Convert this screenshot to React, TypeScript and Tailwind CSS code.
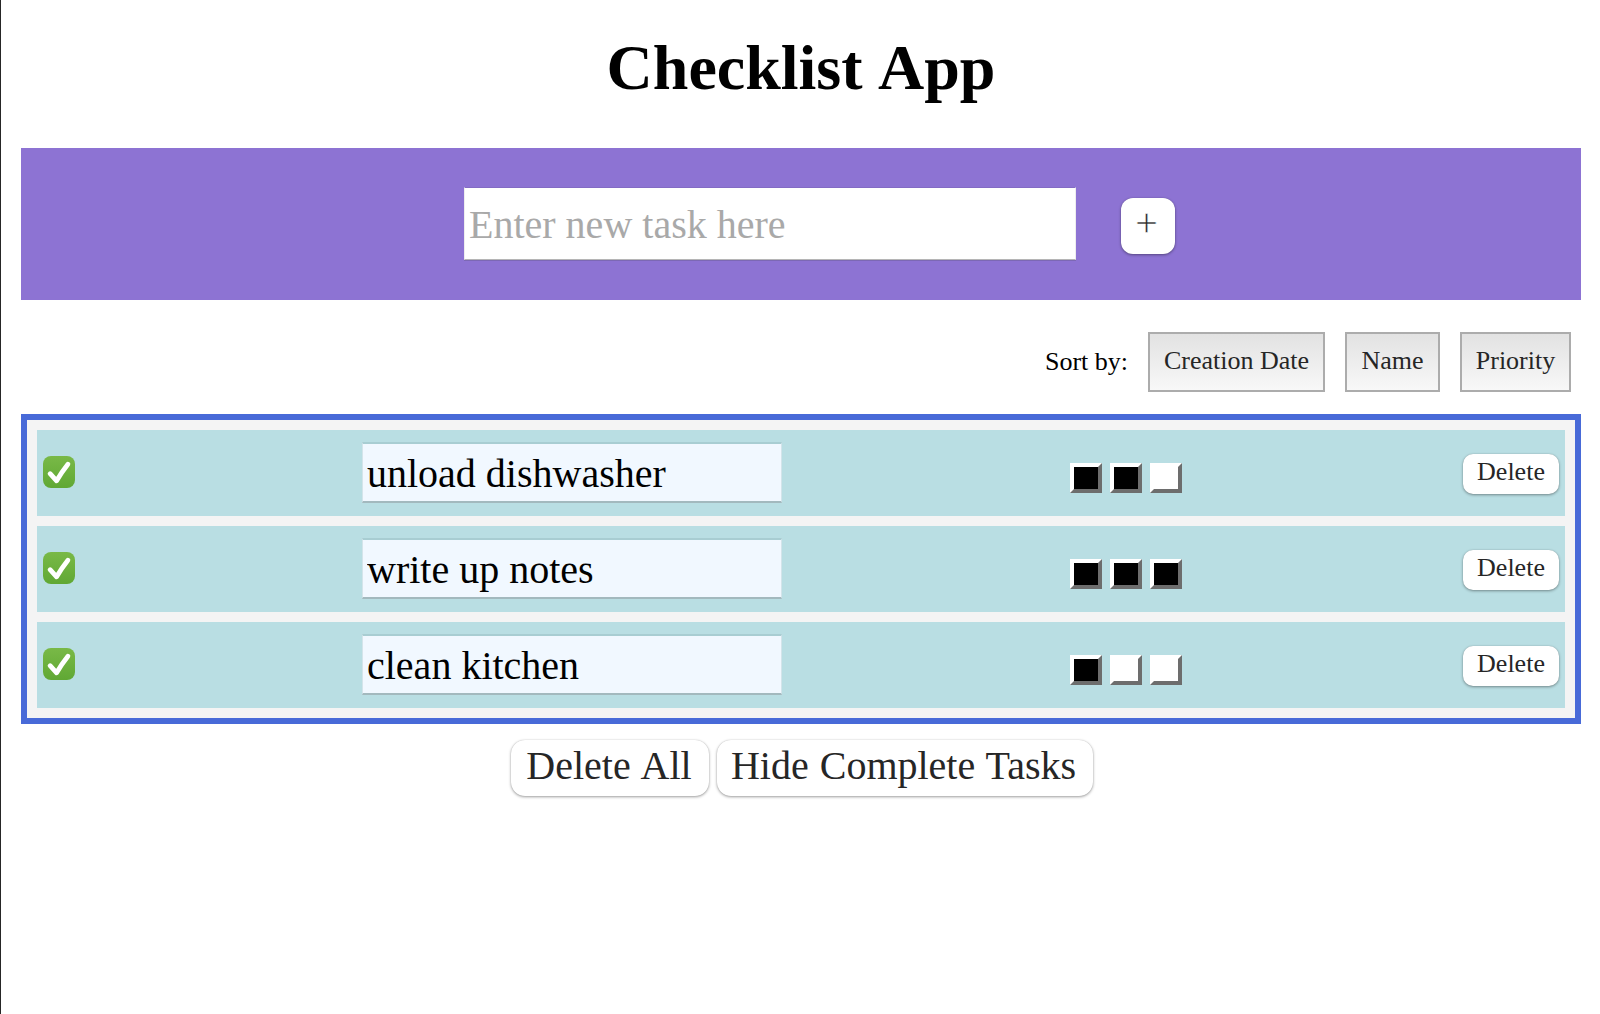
import React from "react";

type Task = { name: string; priority: number };

const tasks: Task[] = [
  { name: "unload dishwasher", priority: 2 },
  { name: "write up notes", priority: 3 },
  { name: "clean kitchen", priority: 1 },
];

const softButton =
  "bg-white text-[#262626] shadow-[0_1px_3px_rgba(0,0,0,0.38),0_0_1px_rgba(0,0,0,0.2)]";

function CheckIcon() {
  return (
    <svg viewBox="0 0 32 32" className="block size-8" fill="none">
      <defs>
        <linearGradient id="check-fill" x1="0" y1="0" x2="0" y2="1">
          <stop offset="0" stopColor="#79b947" />
          <stop offset="1" stopColor="#60a834" />
        </linearGradient>
      </defs>
      <rect width="32" height="32" rx="8" fill="url(#check-fill)" />
      <path
        d="M7.1 17.7 13.6 24.8Q18.8 15.8 24.9 8.2"
        stroke="#fff"
        strokeWidth="4.8"
        strokeLinecap="round"
        strokeLinejoin="round"
      />
    </svg>
  );
}

function SortButton({ label, width }: { label: string; width: string }) {
  return (
    <button
      className={`${width} h-[60px] whitespace-nowrap border-2 border-[#acacac] bg-linear-to-b from-[#e2e2e2] to-[#f8f8f8] pb-[3px] text-[26px] leading-[30px] text-[#262626]`}
    >
      {label}
    </button>
  );
}

function Priority({ level }: { level: number }) {
  return (
    <div className="flex gap-2 pt-[9px] pl-[7px]">
      {[1, 2, 3].map((n) => (
        <button
          key={n}
          aria-label={`Priority ${n}`}
          className={`h-[30px] w-8 border-4 border-t-white border-r-[#6d6d6d] border-b-[#6d6d6d] border-l-white bg-clip-padding ${
            n <= level ? "bg-black" : "bg-white"
          }`}
        />
      ))}
    </div>
  );
}

function TaskRow({ task }: { task: Task }) {
  return (
    <li className="flex h-[86px] items-center justify-between bg-[#b9dee3] px-[6px]">
      <button aria-label="Complete" className="w-[38px] pb-[2px]">
        <CheckIcon />
      </button>
      <input
        defaultValue={task.name}
        className="mb-px h-[61px] w-[420px] border border-t-2 border-b-2 border-x-[#d3e4ea] border-t-[#a8cdd2] border-b-[#a3b9be] bg-[#f1f8ff] pt-px pr-1 pb-0 pl-1 text-[40px] leading-[46px] text-black outline-none"
      />
      <Priority level={task.priority} />
      <button className={`${softButton} mb-[-2px] h-10 w-24 rounded-[10px] pb-[4px] text-[26px] leading-[30px]`}>
        Delete
      </button>
    </li>
  );
}

export default function App() {
  return (
    <div className="min-h-[1014px] border-l border-[#262626] bg-white pr-[19px] pl-5 font-['Liberation_Serif',serif] text-black">
      <h1 className="h-[148px] pt-[31px] text-center text-[64px] leading-[74px] font-bold [word-spacing:3px]">
        Checklist App
      </h1>

      <div className="flex h-[152px] items-center bg-[#8d73d3] pl-[443px]">
        <input
          placeholder="Enter new task here"
          className="mb-px h-[73px] w-[612px] border border-x-[#eeeeee] border-t-[#836bc4] border-b-[#b5b5b5] bg-white pt-[2px] pl-1 text-[40px] shadow-[0_1px_0_#7c68b4] outline-none placeholder:text-[#a9a9a9] placeholder:opacity-100"
        />
        <button
          className={`${softButton} mt-1 ml-[45px] h-14 w-[54px] rounded-[12px] pr-[3px] pb-[6px] text-[40px] leading-[46px] [-webkit-text-stroke:0.4px_#fff]`}
        >
          +
        </button>
      </div>

      <div className="flex h-[114px] items-center justify-end gap-5 pt-[10px] pr-[10px]">
        <span className="text-[26px] leading-[30px]">Sort by:</span>
        <div className="flex gap-5">
          <SortButton label="Creation Date" width="w-[177px]" />
          <SortButton label="Name" width="w-[95px]" />
          <SortButton label="Priority" width="w-[111px]" />
        </div>
      </div>

      <ul className="flex flex-col gap-[10px] border-[6px] border-[#486ad8] bg-[#f4f4f4] p-[10px]">
        {tasks.map((task) => (
          <TaskRow key={task.name} task={task} />
        ))}
      </ul>

      <div className="flex justify-center gap-2 pt-4 pl-px">
        <button
          className={`${softButton} h-14 w-[198px] rounded-[14px] pr-px pb-[5px] text-[40px] leading-[46px] [word-spacing:2px]`}
        >
          Delete All
        </button>
        <button
          className={`${softButton} h-14 w-[376px] rounded-[14px] pr-[2px] pb-[5px] text-[40px] leading-[46px] [word-spacing:1px]`}
        >
          Hide Complete Tasks
        </button>
      </div>
    </div>
  );
}
